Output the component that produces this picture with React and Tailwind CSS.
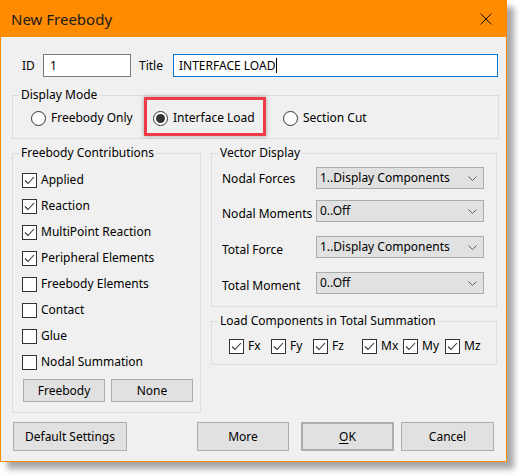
import React from 'react'

const Check = ({ checked }) => (
  <span className="w-[15px] h-[15px] shrink-0 border border-[#333] bg-white flex items-center justify-center">
    {checked && (
      <svg width="11" height="9" viewBox="0 0 11 9" fill="none">
        <path d="M1 4.5 L4 7.5 L10 1" stroke="#333" strokeWidth="1.1" />
      </svg>
    )}
  </span>
)

const Radio = ({ checked }) => (
  <span className="w-[15px] h-[15px] shrink-0 rounded-full border border-[#333] bg-white flex items-center justify-center">
    {checked && <span className="w-[9px] h-[9px] rounded-full bg-[#333]" />}
  </span>
)

const Group = ({ title, className, children }) => (
  <fieldset className={`border border-[#dcdcdc] ${className}`}>
    <legend className="ml-[6px] px-[2px] leading-[16px]">{title}</legend>
    {children}
  </fieldset>
)

const Button = ({ className, children }) => (
  <button className={`border border-[#adadad] bg-[#e1e1e1] flex items-center justify-center ${className}`}>
    {children}
  </button>
)

const Chevron = () => (
  <svg width="9" height="5" viewBox="0 0 9 5" fill="none">
    <path d="M0.5 0.5 L4.5 4.5 L8.5 0.5" stroke="#606060" strokeWidth="1" />
  </svg>
)

const Select = ({ value }) => (
  <div className="w-[168px] h-[22px] border border-[#acacac] bg-[#e1e1e1] flex items-center justify-between pl-[3px] pr-[6px]">
    <span>{value}</span>
    <Chevron />
  </div>
)

const contributions = [
  ['Applied', true],
  ['Reaction', true],
  ['MultiPoint Reaction', true],
  ['Peripheral Elements', true],
  ['Freebody Elements', false],
  ['Contact', false],
  ['Glue', false],
  ['Nodal Summation', false],
]

const vectorRows = [
  ['Nodal Forces', '1..Display Components', 'mt-0', 'pt-[5px]'],
  ['Nodal Moments', '0..Off', 'mt-[11px]', 'pt-[7px]'],
  ['Total Force', '1..Display Components', 'mt-[14px]', 'pt-[7px]'],
  ['Total Moment', '0..Off', 'mt-[14px]', 'pt-[7px]'],
]

const components = [
  ['Fx', 'w-[42px]'],
  ['Fy', 'w-[42px]'],
  ['Fz', 'w-[49px]'],
  ['Mx', 'w-[41px]'],
  ['My', 'w-[42px]'],
  ['Mz', ''],
]

export default function App() {
  return (
    <div className="min-h-[476px] bg-white font-['Noto_Sans',sans-serif] text-[12px] text-black">
      <div className="w-[507px] h-[462px] border border-[#ff8c00] bg-[#f0f0f0] shadow-[7px_7px_6px_rgba(0,0,0,0.35)] flex flex-col">
        <div className="h-[36px] bg-[#ff8c00] flex items-center justify-between pl-[10px] pr-[14px]">
          <span className="text-[15px] text-[#1a1a1a]">New Freebody</span>
          <svg width="12" height="12" viewBox="0 0 12 12" fill="none">
            <path d="M0.5 0.5 L11.5 11.5 M11.5 0.5 L0.5 11.5" stroke="#111" strokeWidth="1" />
          </svg>
        </div>

        <div className="flex-1 pl-[11px]">
          <div className="mt-[17px] h-[23px] flex items-center">
            <span className="ml-[10px] w-[21px]">ID</span>
            <div className="w-[88px] h-[23px] border border-[#7a7a7a] bg-white pl-[6px] flex items-center">1</div>
            <span className="ml-[8px] w-[34px]">Title</span>
            <div className="w-[325px] h-[23px] border border-[#0078d7] bg-white pl-[5px] flex items-center">
              INTERFACE LOAD<span className="ml-[1px] h-[15px] border-l border-black" />
            </div>
          </div>

          <Group title="Display Mode" className="mt-[10px] w-[487px]">
            <div className="pt-[7px] pb-[12px] pl-[18px] flex">
              <label className="w-[122px] h-[16px] flex items-center gap-[5px]">
                <Radio /> Freebody Only
              </label>
              <label className="relative w-[130px] h-[16px] flex items-center gap-[5px]">
                <span className="absolute left-[-9px] top-[-13px] w-[122px] h-[39px] border-[3px] border-[#ef3b47] shadow-[0_0_4px_rgba(0,0,0,0.35)]" />
                <Radio checked /> Interface Load
              </label>
              <label className="h-[16px] flex items-center gap-[5px]">
                <Radio /> Section Cut
              </label>
            </div>
          </Group>

          <div className="mt-[6px] flex gap-[10px] items-start">
            <Group title="Freebody Contributions" className="w-[189px]">
              <div className="pt-[6px] pl-[9px] pb-[10px]">
                {contributions.map(([name, on]) => (
                  <label key={name} className="h-[26px] flex items-center gap-[4px]">
                    <Check checked={on} /> {name}
                  </label>
                ))}
                <div className="mt-[4px] flex gap-[6px] pl-[1px]">
                  <Button className="w-[82px] h-[23px]">Freebody</Button>
                  <Button className="w-[82px] h-[23px]">None</Button>
                </div>
              </div>
            </Group>

            <div className="w-[286px] flex flex-col">
              <Group title="Vector Display" className="w-[286px]">
                <div className="pt-[6px] pl-[10px] pb-[12px]">
                  {vectorRows.map(([label, value, mt, pt]) => (
                    <div key={label} className={`h-[22px] flex items-start ${mt}`}>
                      <span className={`w-[94px] leading-[14px] ${pt}`}>{label}</span>
                      <Select value={value} />
                    </div>
                  ))}
                </div>
              </Group>

              <Group title="Load Components in Total Summation" className="mt-[6px] w-[286px]">
                <div className="pt-[9px] pl-[17px] pb-[10px] flex">
                  {components.map(([name, w]) => (
                    <label key={name} className={`h-[16px] flex items-center gap-[4px] ${w}`}>
                      <Check checked /> {name}
                    </label>
                  ))}
                </div>
              </Group>
            </div>
          </div>

          <div className="mt-[9px] flex">
            <Button className="ml-[1px] w-[114px] h-[29px]">Default Settings</Button>
            <Button className="ml-[70px] w-[92px] h-[29px]">More</Button>
            <Button className="ml-[12px] w-[93px] h-[29px] border-2 border-[#0078d7]">
              <span className="underline underline-offset-2">O</span>K
            </Button>
            <Button className="ml-[7px] w-[93px] h-[29px]">Cancel</Button>
          </div>
        </div>
      </div>
    </div>
  )
}
